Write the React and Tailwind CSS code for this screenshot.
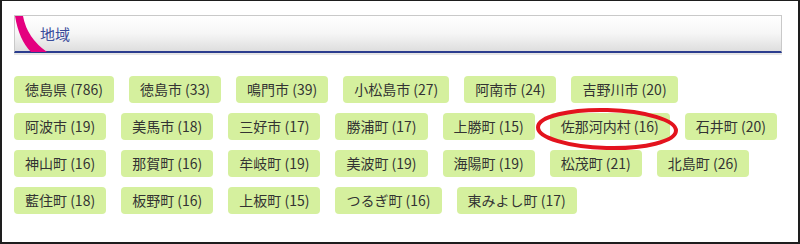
import React from "react";

const rows = [
  ["徳島県 (786)", "徳島市 (33)", "鳴門市 (39)", "小松島市 (27)", "阿南市 (24)", "吉野川市 (20)"],
  ["阿波市 (19)", "美馬市 (18)", "三好市 (17)", "勝浦町 (17)", "上勝町 (15)", "佐那河内村 (16)", "石井町 (20)"],
  ["神山町 (16)", "那賀町 (16)", "牟岐町 (19)", "美波町 (19)", "海陽町 (19)", "松茂町 (21)", "北島町 (26)"],
  ["藍住町 (18)", "板野町 (16)", "上板町 (15)", "つるぎ町 (16)", "東みよし町 (17)"],
];

export default function App() {
  return (
    <div
      className="relative w-[800px] h-[244px] bg-white border-2 border-t border-[#1e1e1e] overflow-hidden"
      style={{ fontFamily: "'Noto Sans CJK JP', 'Noto Sans', sans-serif" }}
    >
      {/* Section header */}
      <div className="mt-[14px] ml-[12px] mr-[16px]">
        <div className="relative h-[38px] border border-b-2 border-[#c9c9c9] border-b-[#2b3d8e] bg-gradient-to-b from-white via-[#f6f6f6] to-[#dedede] flex items-center">
          <svg className="absolute left-0 top-0" width="40" height="36" viewBox="0 0 40 36">
            <path d="M0 0 L8 0 Q12 22 32 36 L16 36 Q4 24 0 0 Z" fill="#e4007f" />
          </svg>
          <span className="relative pl-[25px] text-[15px] text-[#3a4c9b] leading-none">地域</span>
        </div>
        <div className="h-[2px] bg-[#e6e6e6]" />
      </div>

      {/* Area chips */}
      <div className="mt-[21px] ml-[12px] flex flex-col gap-[10px]">
        {rows.map((row, i) => (
          <div key={i} className="flex gap-[15px]">
            {row.map((label) => (
              <div
                key={label}
                className="h-[27px] px-[11px] flex items-center rounded-[4px] bg-[#d5f09e] text-[14px] text-[#333] whitespace-nowrap"
              >
                {label}
              </div>
            ))}
          </div>
        ))}
      </div>

      {/* Highlight mark */}
      <svg className="absolute left-[532px] top-[106px] pointer-events-none" width="146" height="44" viewBox="0 0 146 44">
        <ellipse cx="73" cy="22" rx="69" ry="19" fill="none" stroke="#e3131e" strokeWidth="4" transform="rotate(1.5 73 22)" />
      </svg>
    </div>
  );
}
